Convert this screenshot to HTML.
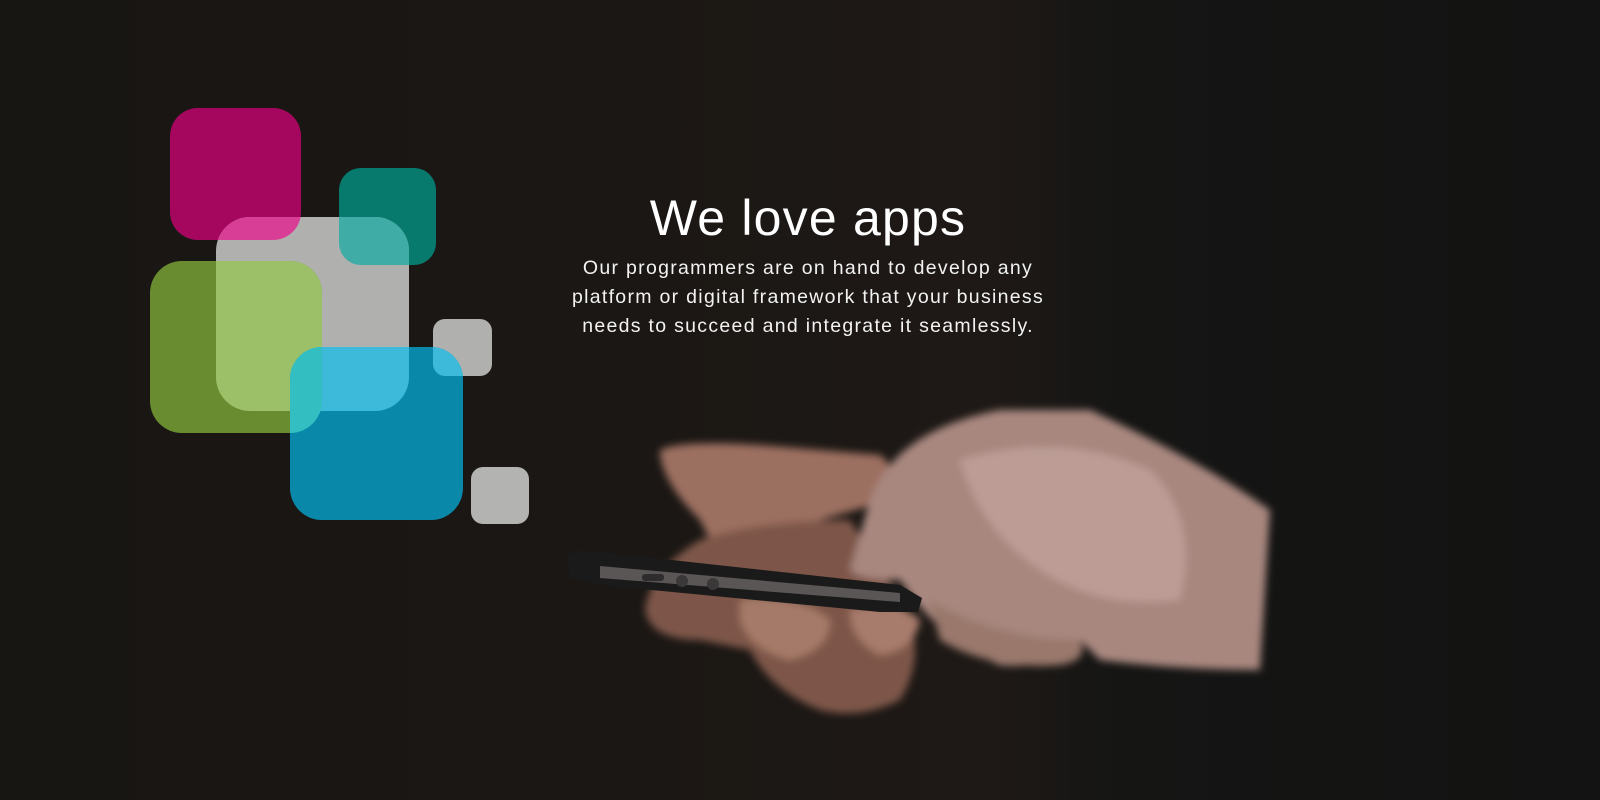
<!DOCTYPE html>
<html><head><meta charset="utf-8"><style>
html,body{margin:0;padding:0;}
body{width:1600px;height:800px;overflow:hidden;position:relative;font-family:"Liberation Sans",sans-serif;}
#bg{position:absolute;inset:0;background:linear-gradient(90deg,#181613 0%,#1b1714 40%,#1e1916 62%,#151514 70%,#121312 100%);}
#art{position:absolute;left:0;top:0;}
h1{position:absolute;left:0;width:1616px;top:189px;margin:0;text-align:center;color:#fff;font-weight:normal;font-size:50px;letter-spacing:1.2px;}
p{position:absolute;left:500px;width:616px;top:254px;margin:0;text-align:center;color:#f2f2f2;font-size:19.5px;letter-spacing:1.3px;line-height:29px;white-space:nowrap;}
</style></head><body>
<div id="bg"></div>
<svg id="art" width="1600" height="800" viewBox="0 0 1600 800">
<defs>
<filter id="b" x="-20%" y="-20%" width="140%" height="140%"><feGaussianBlur stdDeviation="4"/></filter>
<clipPath id="cGray"><rect x="216" y="217" width="193" height="194" rx="34"/></clipPath>
<clipPath id="cGreen"><rect x="150" y="261" width="172" height="172" rx="32"/></clipPath>
<clipPath id="cS1"><rect x="433" y="319" width="59" height="57" rx="12"/></clipPath>
</defs>
<!-- hands -->
<g filter="url(#b)">
<path d="M660 450 Q680 440 760 445 L880 455 Q900 470 890 500 L820 520 Q760 560 720 560 L700 520 Q660 480 660 450Z" fill="#9c7060"/>
<path d="M700 540 Q760 520 850 520 L900 600 Q930 650 900 700 Q860 720 820 710 Q770 690 750 650 L700 640 Q650 640 645 610 Q650 570 700 540Z" fill="#7e5748"/>
<path d="M740 600 Q800 595 830 620 Q830 650 790 660 Q750 650 740 620Z" fill="#a67a68"/>
<path d="M850 610 Q900 600 920 620 Q915 650 880 655 Q850 640 850 610Z" fill="#a87c6c"/>
<path d="M870 500 Q895 430 1000 410 L1090 410 Q1200 460 1270 510 L1260 670 Q1180 670 1100 660 L1080 640 Q1050 670 1000 665 Q940 640 900 580 Q860 580 850 570 Z" fill="#a8877f"/>
<path d="M960 460 Q1060 430 1150 470 Q1200 520 1180 600 Q1100 610 1040 570 Q980 530 960 460Z" fill="#bc9c95"/>
<path d="M930 600 Q1000 640 1080 640 Q1090 660 1060 665 Q990 670 940 640Z" fill="#9a786c"/>
</g>
<!-- phone -->
<path d="M567 555 L580 550 L900 585 L922 598 L918 612 L880 612 L600 585 L570 578 Z" fill="#1b1a1a"/>
<path d="M600 566 L900 593 L900 602 L600 578 Z" fill="#5a5655"/>
<circle cx="682" cy="581" r="6" fill="#3a3838"/><circle cx="713" cy="584" r="6" fill="#3a3838"/>
<rect x="642" y="574" width="22" height="7" rx="3" fill="#2e2c2c"/>
<!-- squares -->
<rect x="170" y="108" width="131" height="132" rx="28" fill="#a5075f"/>
<rect x="339" y="168" width="97" height="97" rx="22" fill="#077a6d"/>
<rect x="216" y="217" width="193" height="194" rx="34" fill="#b0b0ae"/>
<rect x="170" y="108" width="131" height="132" rx="28" fill="#d83e96" clip-path="url(#cGray)"/>
<rect x="339" y="168" width="97" height="97" rx="22" fill="#3fada5" clip-path="url(#cGray)"/>
<rect x="150" y="261" width="172" height="172" rx="32" fill="#6a8c30"/>
<rect x="150" y="261" width="172" height="172" rx="32" fill="#9cc068" clip-path="url(#cGray)"/>
<rect x="433" y="319" width="59" height="57" rx="12" fill="#b0b0ae"/>
<rect x="471" y="467" width="58" height="57" rx="12" fill="#b3b3b1"/>
<rect x="290" y="347" width="173" height="173" rx="32" fill="#0a88aa"/>
<rect x="290" y="347" width="173" height="173" rx="32" fill="#3db9da" clip-path="url(#cGray)"/>
<rect x="290" y="347" width="173" height="173" rx="32" fill="#3db9da" clip-path="url(#cS1)"/>
<rect x="290" y="347" width="173" height="173" rx="32" fill="#33bfc2" clip-path="url(#cGreen)"/>
</svg>
<h1>We love apps</h1>
<p>Our programmers are on hand to develop any<br>platform or digital framework that your business<br>needs to succeed and integrate it seamlessly.</p>
</body></html>
